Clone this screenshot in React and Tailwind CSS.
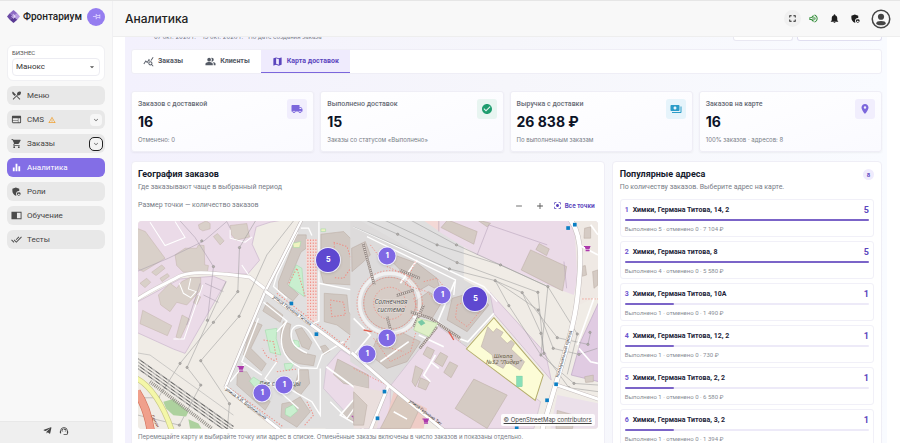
import React from "react";
import {
  MdRestaurantMenu,
  MdWeb,
  MdWarningAmber,
  MdKeyboardArrowDown,
  MdShoppingCart,
  MdEqualizer,
  MdAdminPanelSettings,
  MdDoneAll,
  MdOutlinePushPin,
  MdQueryStats,
  MdPeopleAlt,
  MdMap,
  MdLocalShipping,
  MdCheckCircle,
  MdPayments,
  MdLocationOn,
  MdFullscreen,
  MdOutlineVolumeUp,
  MdNotifications,
  MdCenterFocusStrong,
  MdArrowDropDown,
  MdAdd,
  MdRemove,
  MdSupportAgent,
} from "react-icons/md";
import { FaTelegramPlane } from "react-icons/fa";

function BookIcon({ className }) {
  return (
    <svg viewBox="0 0 24 24" fill="currentColor" className={className}>
      <path d="M1 4h22v16H1ZM13 6v12h8V6Z" fillRule="evenodd" />
    </svg>
  );
}

function AvatarIcon({ className }) {
  return (
    <svg viewBox="0 0 24 24" fill="currentColor" className={className}>
      <circle cx="12" cy="12" r="10.5" fill="none" stroke="currentColor" strokeWidth="1.8" />
      <circle cx="12" cy="9.3" r="3.7" />
      <ellipse cx="12" cy="17" rx="5.6" ry="2.5" />
    </svg>
  );
}

const nav = [
  { label: "Меню", Icon: MdRestaurantMenu },
  { label: "CMS", Icon: MdWeb, warn: true, toggle: "plain" },
  { label: "Заказы", Icon: MdShoppingCart, toggle: "focus" },
  { label: "Аналитика", Icon: MdEqualizer, active: true },
  { label: "Роли", Icon: MdAdminPanelSettings },
  { label: "Обучение", Icon: BookIcon },
  { label: "Тесты", Icon: MdDoneAll },
];

const stats = [
  { label: "Заказов с доставкой", value: "16", note: "Отменено: 0", Icon: MdLocalShipping, tone: "bg-[#f1eefd] text-[#7c67dc]" },
  { label: "Выполнено доставок", value: "15", note: "Заказы со статусом «Выполнено»", Icon: MdCheckCircle, tone: "bg-[#e8f5f1] text-[#1f9d6f]" },
  { label: "Выручка с доставки", value: "26 838 ₽", note: "По выполненным заказам", Icon: MdPayments, tone: "bg-[#e6f4fb] text-[#2b9cc8]" },
  { label: "Заказов на карте", value: "16", note: "100% заказов · адресов: 8", Icon: MdLocationOn, tone: "bg-[#f1eefd] text-[#7c67dc]" },
];

const addresses = [
  { name: "Химки, Германа Титова, 14, 2", count: 5, note: "Выполнено 5 · отменено 0 · 7 104 ₽" },
  { name: "Химки, Германа титова, 8", count: 5, note: "Выполнено 4 · отменено 0 · 5 580 ₽" },
  { name: "Химки, Германа Титова, 10А", count: 1, note: "Выполнено 1 · отменено 0 · 1 490 ₽" },
  { name: "Химки, Германа Титова, 12, 2", count: 1, note: "Выполнено 1 · отменено 0 · 730 ₽" },
  { name: "Химки, Германа Титова, 2, 2", count: 1, note: "Выполнено 1 · отменено 0 · 6 580 ₽" },
  { name: "Химки, Германа Титова, 3, 2", count: 1, note: "Выполнено 1 · отменено 0 · 1 394 ₽" },
];

const pins = [
  { x: 190, y: 39, n: 5 },
  { x: 249, y: 35, n: 1 },
  { x: 304, y: 74, n: 1 },
  { x: 337, y: 78, n: 5 },
  { x: 249, y: 117, n: 1 },
  { x: 229, y: 133, n: 1 },
  { x: 146, y: 164, n: 1 },
  { x: 124, y: 172, n: 1 },
];

function Logo() {
  return (
    <svg viewBox="0 0 24 24" className="size-[13px] shrink-0">
      <path d="M12 0 19 6 12 12 5 6Z" fill="#8d6bc4" />
      <path d="M5 6 12 12 5 18 0 12Z" fill="#6b4aa5" />
      <path d="M19 6 24 12 19 18 12 12Z" fill="#b79be0" />
      <path d="M12 12 19 18 12 24 5 18Z" fill="#5a3a94" />
      <path d="M12 7 16 12 12 16 8 12Z" fill="#e6dbf6" />
      <path d="M12 7 12 16 8 12Z" fill="#a98ad6" />
    </svg>
  );
}

function Sidebar() {
  return (
    <aside className="flex w-[113px] shrink-0 flex-col border-r border-[#f0f0f2] bg-[#f8f8f8] font-['Roboto','Liberation_Sans',sans-serif]">
      <div className="flex h-[31px] items-center gap-[3px] px-[7px]">
        <Logo />
        <span className="flex-1 text-[10px] font-medium text-[#222]">Фронтариум</span>
        <button aria-label="Закрепить меню" className="flex size-[18px] items-center justify-center rounded-full bg-[#957df0] text-[#e4dcff]">
          <MdOutlinePushPin className="size-[9px] rotate-90" />
        </button>
      </div>
      <div className="mx-[7px] mt-[13px] rounded-[6px] border border-[#f0f0f3] bg-white px-1 pt-[3px] pb-1">
        <label htmlFor="biz" className="block text-[6px] leading-[8px] text-[#555]">БИЗНЕС</label>
        <div className="relative mt-px">
          <select id="biz" className="block h-[18px] w-full appearance-none rounded-[4px] border border-[#ececf2] bg-white px-[3px] text-[8px] text-[#333]">
            <option>Манокс</option>
          </select>
          <MdArrowDropDown className="pointer-events-none absolute top-1 right-[3px] size-[10px] text-[#555]" />
        </div>
      </div>
      <nav className="mx-[7px] mt-[5px] flex flex-col gap-[5px]">
        {nav.map(({ label, Icon, warn, toggle, active }) => (
          <div
            key={label}
            className={`flex h-[19px] items-center rounded-[6px] pr-[3px] pl-1 ${active ? "bg-[#836ee6] text-white" : "bg-[#e8e8e8] text-[#444]"}`}
          >
            <a href="#" className="flex flex-1 items-center text-[8px]">
              <Icon className={`mr-[5px] size-[11px] ${active ? "" : "text-[#4a4a4a]"}`} />
              {label}
              {warn && <MdWarningAmber className="ml-1 size-2 text-[#f0a030]" />}
            </a>
            {toggle && (
              <button
                aria-label={`Раскрыть ${label}`}
                className={`flex size-3 items-center justify-center rounded-[4px] text-[#555] ${toggle === "focus" ? "bg-[#f3f3f3] outline outline-[#222]" : "bg-[#f6f6f6]"}`}
              >
                <MdKeyboardArrowDown className="size-2" />
              </button>
            )}
          </div>
        ))}
      </nav>
      <div className="mt-auto flex h-[22px] items-start justify-center gap-[7px] border-t border-[#e8e8e8] bg-[#efefef] pt-1 text-[#444]">
        <FaTelegramPlane className="size-[9px]" />
        <MdSupportAgent className="size-[10px]" />
      </div>
    </aside>
  );
}

function TopBar() {
  return (
    <header className="flex h-9 shrink-0 items-center border-b border-[#eeeeee] bg-[#f8f8f8] pr-[9px] pl-3">
      <h1 className="flex-1 font-['Inter',sans-serif] text-[12px] font-medium text-[#222]">Аналитика</h1>
      <div className="flex items-center gap-[10px] text-[#1e1e1e]">
        <button aria-label="Во весь экран" className="rounded-full bg-[#f0f0f0] outline-3 outline-[#f0f0f0]">
          <MdFullscreen className="size-[11px]" />
        </button>
        <button aria-label="Звук" className="text-[#2e8b35]"><MdOutlineVolumeUp className="size-[11px]" /></button>
        <button aria-label="Уведомления"><MdNotifications className="size-[11px]" /></button>
        <button aria-label="Права доступа"><MdAdminPanelSettings className="size-[11px]" /></button>
        <button aria-label="Профиль" className="text-[#444]"><AvatarIcon className="size-5" /></button>
      </div>
    </header>
  );
}

function Tab({ Icon, label, active }) {
  return (
    <button
      className={`flex h-full items-center gap-1 px-[11px] text-[7px] font-bold ${active ? "border-b border-[#7b66dc] bg-[#efebfd] text-[#5b45bd]" : "text-[#555b66]"}`}
    >
      <Icon className="size-[11px]" />
      {label}
    </button>
  );
}

function StatCard({ label, value, note, Icon, tone }) {
  return (
    <div className="flex h-[61px] items-start justify-between rounded-[3px] border border-[#efeef6] bg-gradient-to-br from-white to-[#fafaff] px-[6px] pt-[7px] shadow-xs">
      <div>
        <div className="text-[7px] leading-[10px] font-medium text-[#666b75]">{label}</div>
        <div className="mt-1 font-['Inter',sans-serif] text-[14px] leading-[18px] font-bold text-[#0c1326]">{value}</div>
        <div className="mt-[5px] font-['Inter',sans-serif] text-[6px] leading-[8px] text-[#777c86]">{note}</div>
      </div>
      <span className={`flex size-5 items-center justify-center rounded-[3px] ${tone}`}>
        <Icon className="size-3" />
      </span>
    </div>
  );
}

function MapLeft() {
  return (
    <g transform="translate(-24 -18)">
      {/* industrial land */}
      <g fill="#ebdbe8" stroke="#c9b3cc" strokeWidth="2">
        <path d="M20 10H490L420 22 378 36 366 88 388 136 352 178 250 172 160 180 20 250Z" />
        <path d="M20 262 150 192 250 184 288 200 165 415 130 402 20 352Z" />
      </g>
      {/* residential land */}
      <path d="M515 10H1000V300L720 640H440L285 515 408 232Z" fill="#e0dfdf" />
      <path d="M632 404 760 480 860 700H620L540 560 590 455Z" fill="#e0dfdf" />
      <path d="M632 404 780 500V640H690L580 520 588 455Z" fill="#ebdbe8" stroke="#cdbfd0" strokeWidth="2" />
      {/* buildings of the industrial area */}
      <g fill="#d9d0c9" stroke="#c2b3ab" strokeWidth="1.5">
        <path d="M20 40 46 50 105 130 40 170 20 160Z" />
        <path d="M135 120 165 100 200 100 205 90 222 92 224 150 235 152 232 170 160 172 140 152Z" />
        <path d="M205 30 228 18 240 26 240 42 218 48 208 42Z" />
        <path d="M250 65 262 56 282 78 270 90Z" />
        <path d="M300 32 350 26 358 66 318 76 304 60Z" />
        <path d="M85 240 120 205 140 220 155 200 180 188 212 188 212 225 170 270 140 262 120 290 92 270Z" />
        <path d="M38 286 125 332 112 362 30 326Z" />
        <path d="M30 205 50 190 62 202 45 218Z" />
        <path d="M65 172 95 150 105 160 78 182Z" />
        <path d="M90 190 112 176 118 184 96 200Z" />
        <path d="M156 300 178 312 150 372 138 366Z" />
        <path d="M190 262 202 240 212 246 200 270Z" />
      </g>
      <g fill="none" stroke="#fff" strokeWidth="3">
        <path d="M60 22 105 92 165 68 135 20" />
        <path d="M300 45V70L345 82 366 66" />
        <path d="M148 205 160 235 182 248 198 230 175 222 182 190" />
        <path d="M130 372 162 372 218 210" />
        <path d="M335 150 358 184" />
      </g>
      <path d="M20 254C70 220 110 205 150 183 190 168 240 174 290 178L358 186 410 226" fill="none" stroke="#cfc6c6" strokeWidth="12" />
      <path d="M20 254C70 220 110 205 150 183 190 168 240 174 290 178L358 186 410 226" fill="none" stroke="#fff" strokeWidth="9" />
      {/* property borders and power lines */}
      <g fill="none" stroke="#a99cab" strokeWidth="1.6">
        <path d="M150 18 195 68 250 155 232 316" />
        <path d="M20 170 115 130 222 78 290 20 300 40" />
        <path d="M225 205 280 230M220 240 265 262M210 205 170 330" />
      </g>
      <g fill="none" stroke="#999" strokeWidth="1.6">
        <path d="M376 18 328 98 323 230 250 322 150 445 85 548 24 548" />
        <path d="M490 18 410 120 327 304 212 437 298 566 292 638" />
        <path d="M288 200 171 457 212 510 148 630 24 600" />
        <path d="M24 414 60 420 310 600" stroke="#aaa" />
      </g>
      <g fill="#b5b0ab" stroke="#888" strokeWidth="1.5">
        {[[328, 98], [323, 230], [327, 304], [250, 322], [232, 316], [212, 437], [171, 457], [150, 445], [212, 510], [298, 566], [85, 548], [148, 630], [250, 155], [215, 78]].map(([x, y]) => (
          <circle key={`${x}-${y}`} cx={x} cy={y} r="3.5" />
        ))}
      </g>
      {/* railway, motorway and greenery */}
      <path d="M100 560 130 552 175 590 168 604 130 600 108 580ZM175 612 205 625 214 640H180Z" fill="#add19e" />
      <g fill="none">
        <path d="M20 490C60 510 100 570 125 645" stroke="#c9c98a" strokeWidth="17" />
        <path d="M20 490C60 510 100 570 125 645" stroke="#f4f7a8" strokeWidth="13" />
        <path d="M20 530C40 560 55 600 62 645" stroke="#d4735d" strokeWidth="25" />
        <path d="M20 530C40 560 55 600 62 645" stroke="#f0a08c" strokeWidth="21" />
        <path d="M60 500C120 545 180 590 245 640" stroke="#96928c" strokeWidth="11" strokeDasharray="3 3" />
        {[0, 10, 20, 30].map((d) => (
          <g key={d}>
            <path d={`M20 ${428 + d} 310 ${634 + d}`} stroke="#666" strokeWidth="3" />
            <path d={`M20 ${428 + d} 310 ${634 + d}`} stroke="#f4f2ee" strokeWidth="2" strokeDasharray="14 14" />
          </g>
        ))}
      </g>
      <text x="62" y="602" fontSize="13" fill="#7a3525" transform="rotate(62 62 602)" className="font-['Noto_Sans',sans-serif]">Ленин</text>
      {/* residential quarter north */}
      <g fill="#d0c8c2" stroke="#b9aaa0" strokeWidth="1.5">
        <path d="M500 60 528 60 528 100 512 112 472 208 505 238 488 258 445 225 445 200Z" />
        <path d="M572 58 640 50 690 100 705 160 665 210 580 205 572 175Z" />
        <path d="M582 235 650 240 655 290 690 340 660 360 620 330 582 320Z" />
        <path d="M410 262 458 300 450 322 398 288Z" />
        <path d="M365 318 396 330 362 400 408 446 394 468 340 420Z" />
        <path d="M460 320 482 328C470 370 490 400 520 414L556 422 550 452 505 446C455 425 440 370 460 320Z" />
        <path d="M495 345 515 338 545 382 536 404 515 395Z" />
        <path d="M508 464 534 464 538 505 510 540 490 520Z" />
        <path d="M322 470 350 470 362 490 420 560 405 585 320 510Z" />
        <path d="M455 566 485 560 510 545 540 590 500 636 452 606Z" />
        <path d="M570 395 585 390 600 408 582 418Z" />
        <path d="M622 432 715 480V520L640 505 610 478Z" />
        <path d="M672 548 715 580 680 625 634 598Z" />
      </g>
      <g fill="#c9efcf" stroke="#9bd8a4" strokeWidth="1.5">
        <path d="M498 150 515 160 522 245 476 212Z" />
        <path d="M405 345 440 340 438 370 452 420 420 412Z" />
        <path d="M462 446 492 444 482 462 466 466Z" />
        <path d="M466 580 490 568 502 588 480 606 465 598Z" />
        <path d="M358 498 370 486 395 502 376 520Z" />
        <path d="M490 375 505 378 508 395 496 398Z" />
        <path d="M488 85 512 80 508 98 490 98Z" fill="#eff3c0" />
        <path d="M572 42 586 42 586 50 572 50Z" fill="#eff3c0" />
      </g>
      <path d="M527 72H560V318H530Z" fill="#f2dcd9" />
      <g fill="none" stroke="#f08a80" strokeWidth="3" strokeDasharray="4 5">
        <path d="M533 74V310M541 74V310M549 74V310M557 74V310" />
        <path d="M610 82 650 95 668 150 640 190 610 188M612 85V130" />
        <path d="M600 255 640 262 645 300 605 305 600 262" />
        <path d="M440 235 700 435M690 320 640 390" />
        <path d="M400 375 430 380 440 440 410 425 396 400M300 520 460 636M440 470 500 462M530 560 550 600 520 634M476 205 500 160 525 245" />
      </g>
      <g fill="none" stroke="#fff" strokeWidth="4">
        <path d="M512 40 535 40 545 62M502 52 440 180 430 215 470 250" />
        <path d="M566 20V318L540 330M566 205 690 230M400 262 470 318 440 350" />
        <path d="M385 310 335 440 395 480M470 318C440 370 450 430 510 458L560 460 575 420 640 380" />
        <path d="M485 345C475 385 500 400 530 414M485 345C500 320 530 330 550 370L572 405" />
        <path d="M440 440 405 490 505 580M505 460V495L475 520 545 560 570 600V460M300 500 345 445M600 560 650 610 700 540" />
        <path d="M588 455 690 530 630 600 700 640" strokeWidth="5" />
      </g>
      <g fill="none">
        <path d="M515 14 404 232 285 518" stroke="#bdb5b5" strokeWidth="10" />
        <path d="M515 14 404 232 285 518" stroke="#fff" strokeWidth="7" />
        <path d="M404 228 720 458M285 515 450 645" stroke="#c4bcbc" strokeWidth="12" />
        <path d="M404 228 720 458M285 515 450 645" stroke="#fff" strokeWidth="9" />
      </g>
      <g className="font-['Noto_Sans',sans-serif]" fill="#333" fontSize="13">
        <text x="428" y="248" transform="rotate(37 428 248)">улица Германа Титова</text>
        <text x="286" y="524" transform="rotate(37 286 524)">улица К.И. Вороницына</text>
        <text x="386" y="512" fontSize="20" fontStyle="italic" fill="#666">Две столицы</text>
      </g>
      <g fill="#0a7fc4">
        <rect x="478" y="260" width="11" height="11" />
        <rect x="553" y="352" width="11" height="11" />
      </g>
      <g fill="#ac39ac">
        <path d="M322 453H342L338 464H327L325 456H322ZM327 466H339V470H327Z" />
        <path d="M664 602H684L680 613H669L667 605H664ZM669 614H681V618H669Z" />
      </g>
    </g>
  );
}

function MapRight() {
  return (
    <g transform="translate(666 -78)">
      {/* land use */}
      <path d="M190 70H720V170C690 180 660 190 640 300L560 270 350 180 235 110Z" fill="#ebdbe8" />
      <path d="M640 70H720V300L655 330Z" fill="#efe9e4" />
      <path d="M180 70H238V110Z" fill="#f4d9d6" />
      <path d="M-30 60 390 300 405 355 315 460 232 392 85 575-30 500Z" fill="#dddbdb" />
      <path d="M388 292 555 475 572 555 400 355Z" fill="#ebdbe8" stroke="#c9b3cc" strokeWidth="2" />
      <path d="M232 392 540 620 520 700H250L88 575Z" fill="#ebdbe8" stroke="#cbbccc" strokeWidth="2" />
      <path d="M400 368 548 540 524 616 318 462Z" fill="#fcfcd6" stroke="#b4ad6c" strokeWidth="3" />
      <path d="M715 320 660 440 632 540 715 560Z" fill="#e0cbe2" stroke="#bda6c4" strokeWidth="2" />
      <path d="M590 600 715 625V700H570Z" fill="#ebe0ea" />
      <path d="M-20 570 70 590 50 700H-20Z" fill="#eadfdd" />
      <path d="M100 590 200 640 190 700H70Z" fill="#efccc6" />
      {/* buildings */}
      <g fill="#d5cbc4" stroke="#b9aaa0" strokeWidth="1.5">
        <path d="M262 75 350 110 340 148 242 98Z" />
        <path d="M350 75 390 85 380 96Z" />
        <path d="M510 165 618 215 606 288 482 225Z" />
        <path d="M536 146 566 162 558 182 526 164Z" />
        <path d="M382 395 398 412 408 400 428 412 420 425 440 445 452 436 462 446 452 462 492 500 478 525 440 500 428 520 400 505 395 480 362 455Z" />
        <path d="M340 552 440 600 380 700 284 640Z" />
        <path d="M240 472 262 484 246 515 222 500ZM268 500 292 512 272 548 250 532ZM200 455 222 466 210 492 188 478ZM165 512 188 525 165 575 155 560ZM180 548 208 560 196 585 172 575Z" />
        <path d="M112 600 180 635 150 700H60Z" fill="#d9cabf" />
        <path d="M-20 590 20 630 10 690-20 690Z" />
        <path d="M590 646 640 660 636 700H586Z" />
        <path d="M672 100 690 96 690 130 670 130ZM696 230 712 225V270L700 280ZM660 215 674 212 678 240 665 244Z" />
        <path d="M672 545 698 540 698 560 675 562Z" />
      </g>
      {/* circular quarter */}
      <g fill="#cfc6c0" stroke="#b5a59c" strokeWidth="1.5">
        <path d="M-26 160 15 140 30 180 10 200-25 230Z" />
        <path d="M60 165 170 205 230 250 240 290 205 270 170 290 150 260 120 225Z" />
        <path d="M150 330 205 290 245 320 215 370 160 360Z" />
        <path d="M275 310 345 290 385 330 320 410 260 375Z" />
        <path d="M80 520 30 480 50 430 120 410 180 440 140 500Z" />
        <circle cx="88" cy="325" r="78" fill="#d6ccc6" />
      </g>
      <g fill="none" stroke="#fff">
        <circle cx="88" cy="325" r="90" strokeWidth="10" strokeOpacity=".6" />
        <path d="M170 195 120 265M283 260 232 380 300 432 322 440 400 355M-20 370 30 420-20 480M158 365 232 392M145 440 60 500" strokeWidth="5" />
        <path d="M-20 95 370 275 410 320" strokeWidth="4" />
        <path d="M20 125 285 255 280 300" strokeWidth="4" />
        <path d="M225 480 190 540 210 560M250 455 175 420M210 500 235 520" strokeWidth="5" />
      </g>
      <g fill="none" stroke="#f08a80" strokeWidth="2.5" strokeDasharray="4 5">
        <circle cx="88" cy="325" r="98" />
        <circle cx="88" cy="325" r="78" />
        <circle cx="88" cy="325" r="48" />
        <path d="M165 200 135 270 200 290 240 330M30 150 80 215 160 250M40 430 90 500 150 470 170 400M60 450 130 470M290 330 340 310 370 335 320 395 285 370ZM190 260 230 250 250 275M160 310 180 370" />
        <path d="M250 400 300 440M-20 520 80 570" />
        <path d="M665 312H715" />
      </g>
      <g fill="none" stroke="#8f8580" strokeWidth="8">
        <path d="M8 145 42 270M118 225 178 250M108 302 160 285M150 350 210 370 300 430M230 395 178 460M190 330 160 395M80 365 92 410" />
      </g>
      <g fill="none" stroke="#e3d9d4" strokeWidth="6" strokeDasharray="3 3">
        <path d="M8 145 42 270M118 225 178 250M108 302 160 285M150 350 210 370 300 430M230 395 178 460M190 330 160 395M80 365 92 410" />
      </g>
      <g stroke="#e0604f" strokeWidth="4">
        <path d="M10 405 34 410M265 410 280 435" />
      </g>
      <path d="M172 370 232 385 205 425 160 405Z" fill="#dff0c8" stroke="#b8d8a5" strokeWidth="2" />
      <path d="M172 380 185 374 195 385 182 392Z" fill="#78c9a5" />
      <rect x="468" y="543" width="17" height="32" fill="#88dfb8" stroke="#5fbf95" />
      {/* power lines */}
      <g fill="none" stroke="#999" strokeWidth="1.6">
        <path d="M-20 95 267 222 404 257 485 293 590 428 682 448 690 412" />
        <path d="M60 70 230 150 420 210 562 275 650 417 620 538" />
        <path d="M-20 60 112 118 290 203 532 292 550 475 625 578 715 590" />
        <path d="M140 70 288 150 562 275 541 480" />
        <path d="M404 257 445 332 541 480 640 565 715 570" />
        <path d="M404 257 533 345 578 460 655 478 710 460" />
        <path d="M485 293 541 415 550 475" />
        <path d="M350 180 385 90M385 90 560 150M235 78V110M610 200 618 280" stroke="#b49fb8" />
      </g>
      <g fill="#b5b0ab" stroke="#888" strokeWidth="1.5">
        {[[267, 222], [404, 257], [485, 293], [590, 428], [682, 448], [230, 150], [420, 210], [562, 275], [650, 417], [112, 118], [290, 203], [532, 292], [550, 475], [625, 578], [288, 150], [445, 332], [533, 345], [578, 460], [655, 478], [541, 415], [541, 480], [640, 565], [688, 412]].map(([x, y]) => (
          <circle key={`${x}-${y}`} cx={x} cy={y} r="3.5" />
        ))}
      </g>
      {/* streets */}
      <g fill="none">
        <path d="M630 75C670 130 660 220 650 310 640 400 610 480 545 705" stroke="#c4bcbc" strokeWidth="16" />
        <path d="M630 75C670 130 660 220 650 310 640 400 610 480 545 705" stroke="#fff" strokeWidth="13" />
        <path d="M-26 473 84 570 262 715M84 572 30 705M590 570 720 615" stroke="#c4bcbc" strokeWidth="12" />
        <path d="M-26 473 84 570 262 715M84 572 30 705M590 570 720 615" stroke="#fff" strokeWidth="9" />
        <path d="M690 90 712 120M655 150 712 180M655 460 690 500 712 505M700 310 650 450M100 650 140 672" stroke="#fff" strokeWidth="5" />
      </g>
      <g className="font-['Noto_Sans',sans-serif]" fill="#333" fontSize="13">
        <text x="146" y="620" transform="rotate(37 146 620)">улица Германа Тит</text>
        <text x="594" y="548" transform="rotate(-74 594 548)">Коммунальный проезд</text>
        <g fontStyle="italic" fontSize="20" fill="#555" textAnchor="middle" stroke="#e9e3df" strokeWidth="3" paintOrder="stroke">
          <text x="92" y="326">Солнечная</text>
          <text x="92" y="351">система</text>
        </g>
        <g fontStyle="italic" fontSize="18" fill="#6b6248" textAnchor="middle">
          <text x="428" y="488">Школа</text>
          <text x="430" y="508">№32 "Лидер"</text>
        </g>
      </g>
      <g fill="#0a7fc4">
        {[[617, 94], [637, 84], [67, 584], [46, 664], [581, 562], [554, 610], [463, 694]].map(([x, y]) => (
          <rect key={`${x}-${y}`} x={x} y={y} width="11" height="11" />
        ))}
      </g>
      <path d="M670 153H690L686 164H675L673 156H670ZM675 165H687V169H675ZM186 670H206L202 681H191L189 673H186ZM191 682H203V686H191Z" fill="#ac39ac" />
    </g>
  );
}

function DeliveryMap() {
  return (
    <div className="relative h-[208px] overflow-hidden rounded-[4px] bg-[#f0ece6]">
      <svg viewBox="0 0 1377 624" preserveAspectRatio="xMidYMid slice" className="block size-full" role="img" aria-label="Карта заказов">
        <rect width="1377" height="624" fill="#f0ece6" />
        <MapLeft />
        <MapRight />
      </svg>
      {pins.map(({ x, y, n }) => (
        <button
          key={`${x}-${y}`}
          style={{ left: `${(x / 459) * 100}%`, top: `${(y / 208) * 100}%` }}
          className={`absolute flex -translate-1/2 items-center justify-center rounded-full border border-white/90 font-['Inter',sans-serif] text-[7px] font-extrabold text-white shadow ${n > 1 ? "size-[26px] bg-[#5e48d0]" : "size-[19px] bg-[#7f68e4]"}`}
        >
          {n}
        </button>
      ))}
      <a href="#" className="absolute right-[3px] bottom-[3px] rounded-[2px] bg-white/90 px-[3px] font-['Inter',sans-serif] text-[6px] leading-[12px] text-[#444] underline">
        © OpenStreetMap contributors
      </a>
    </div>
  );
}

function GeoPanel() {
  return (
    <section className="h-[300px] min-w-0 flex-1 rounded-t-[4px] border border-[#efeef6] bg-white px-[6px] pt-[6px]">
      <h2 className="text-[9px] leading-[13px] font-bold text-[#141a2c]">География заказов</h2>
      <p className="text-[7px] leading-[12px] text-[#777c86]">Где заказывают чаще в выбранный период</p>
      <div className="mt-1 mb-[7px] flex h-[17px] items-center">
        <span className="flex-1 text-[7px] text-[#777c86]">Размер точки — количество заказов</span>
        <button aria-label="Отдалить" className="mr-[11px] text-[#555]"><MdRemove className="size-[10px]" /></button>
        <button aria-label="Приблизить" className="mr-2 text-[#555]"><MdAdd className="size-[10px]" /></button>
        <button className="flex items-center gap-[3px] pr-[3px] font-['Inter',sans-serif] text-[6px] font-bold text-[#5b45bd]">
          <MdCenterFocusStrong className="size-[9px]" />
          Все точки
        </button>
      </div>
      <DeliveryMap />
      <p className="mt-1 font-['Inter',sans-serif] text-[6px] leading-[8px] text-[#777c86]">
        Перемещайте карту и выбирайте точку или адрес в списке. Отменённые заказы включены в число заказов и показаны отдельно.
      </p>
    </section>
  );
}

function AddressPanel() {
  return (
    <section className="h-[300px] w-[36%] shrink-0 rounded-t-[4px] border border-[#efeef6] bg-white px-[7px] pt-[6px]">
      <div className="flex items-center justify-between">
        <h2 className="text-[9px] leading-[13px] font-bold text-[#141a2c]">Популярные адреса</h2>
        <span className="flex size-[11px] items-center justify-center rounded-full bg-[#efebfd] text-[6px] font-bold text-[#5b45bd]">8</span>
      </div>
      <p className="text-[7px] leading-[12px] text-[#777c86]">По количеству заказов. Выберите адрес на карте.</p>
      <ol className="mt-[6px] flex flex-col gap-1">
        {addresses.map(({ name, count, note }, i) => (
          <li key={name} className="h-[38px] rounded-[3px] border border-[#f1f0f8] px-1 pt-[5px]">
            <div className="flex items-center gap-1 text-[7px] leading-[11px] font-bold text-[#1c2338]">
              <span className="text-[#6c55cf]">{i + 1}</span>
              <span className="flex-1">{name}</span>
              <span className="text-[9px] text-[#5b45bd]">{count}</span>
            </div>
            <div className="mt-[3px] h-[2px] rounded-full bg-[#edeaf8]">
              <div className="h-full rounded-full bg-[#7b64c8]" style={{ width: `${(count / 5) * 100}%` }} />
            </div>
            <p className="mt-1 text-[6px] leading-[8px] text-[#888c95]">{note}</p>
          </li>
        ))}
      </ol>
    </section>
  );
}

export default function App() {
  return (
    <div className="flex h-screen overflow-hidden border-t border-[#e6e6e6] bg-white font-['Roboto','Noto_Sans',sans-serif]">
      <Sidebar />
      <div className="flex min-w-0 flex-1 flex-col">
        <TopBar />
        <main className="min-h-0 flex-1 overflow-hidden pr-[13px] pl-3">
          <div className="h-full bg-gradient-to-r from-[#f3f1fd] via-[#f6f6fb] to-[#f9fbff] pr-[5px] pl-[6px]">
            <div className="flex h-3 items-start justify-between overflow-hidden pl-[23px]">
              <p className="-mt-[5px] font-['Inter',sans-serif] text-[6px] leading-[9px] text-[#777c86]">07 окт. 2026 г. – 15 окт. 2026 г. · По дате создания заказа</p>
              <div className="flex gap-1">
                <div className="h-1 w-[60px] rounded-b-[3px] border border-t-0 border-[#e9e8f2] bg-white" />
                <div className="h-1 w-[85px] rounded-b-[3px] border border-t-0 border-[#e0def0] bg-white" />
              </div>
            </div>
            <div className="flex h-[25px] rounded-[3px] border border-[#efeef6] bg-white">
              <Tab Icon={MdQueryStats} label="Заказы" />
              <Tab Icon={MdPeopleAlt} label="Клиенты" />
              <Tab Icon={MdMap} label="Карта доставок" active />
            </div>
            <div className="mt-[17px] grid grid-cols-4 gap-[6px]">
              {stats.map((s) => (
                <StatCard key={s.label} {...s} />
              ))}
            </div>
            <div className="mt-[9px] flex gap-[7px]">
              <GeoPanel />
              <AddressPanel />
            </div>
          </div>
        </main>
      </div>
    </div>
  );
}
